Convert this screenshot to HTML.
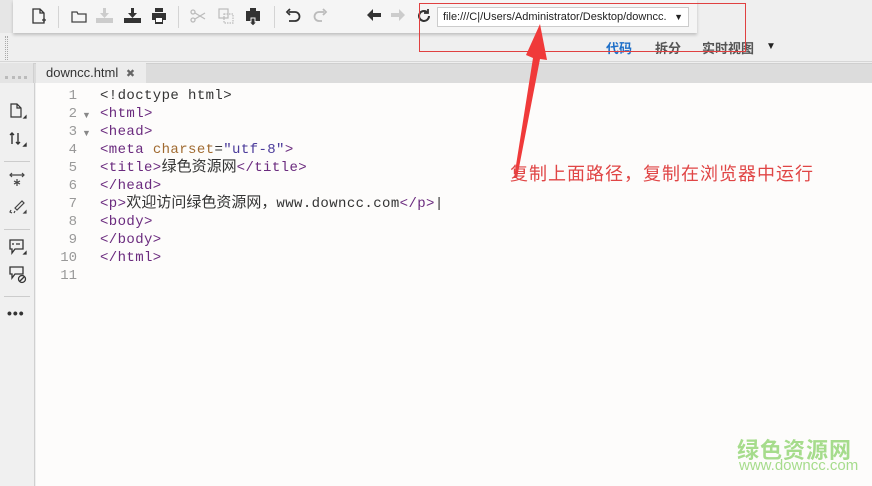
<!DOCTYPE html>
<html><head><meta charset="utf-8"><style>
*{margin:0;padding:0;box-sizing:border-box}
body{width:872px;height:486px;overflow:hidden;background:#efefef;font-family:"Liberation Sans","Noto Sans CJK SC",sans-serif;position:relative}
.abs{position:absolute}
#tb{left:13px;top:0;width:684px;height:33px;background:#f5f5f5;box-shadow:0 2px 3px rgba(0,0,0,.2)}
.sep{position:absolute;top:6px;width:1px;height:22px;background:#d4d4d4}
.ic{position:absolute;top:8px}
#url{left:437px;top:7px;width:252px;height:20px;background:#fff;border:1px solid #ccc;font-size:11px;line-height:18px;padding-left:5px;color:#222}
#tabs{left:0;top:63px;width:872px;height:20px;background:#dcdcdc;border-top:1px solid #cfcfcf}
#tab{left:36px;top:63px;width:110px;height:20px;background:#ececec;font-size:13px;line-height:20px;padding-left:10px;color:#333}
#side{left:0;top:83px;width:35px;height:403px;background:#f0f0f0;border-right:1px solid #d0d0d0}
#ed{left:36px;top:83px;width:836px;height:403px;background:#fdfcfb}
.ln{position:absolute;left:40px;width:37px;text-align:right;font:14px/18px "Liberation Mono",monospace;color:#999;height:18px}
.cd{position:absolute;left:100px;font:14px/18px "Liberation Mono","Noto Sans CJK SC",monospace;color:#333;white-space:pre;letter-spacing:0.4px;height:18px}
.cd .z{letter-spacing:0;font-size:15px}
.t{color:#6a2a7e}.a{color:#a06a30}.s{color:#4a3a9a}
.fold{position:absolute;left:82px;font-size:9px;color:#888}
</style></head><body>
<div class="abs" style="left:0;top:0;width:13px;height:33px;background:#e6e6e6"></div>
<div id="tb" class="abs">
<svg class="ic" style="left:18px" width="16" height="17" viewBox="0 0 16 17" fill="none" stroke="#333" stroke-width="1.3"><path d="M2 1h7l4 4v10H2z M9 1v4h4"/><path d="M11 12h4M13 10v4"/></svg>
<div class="sep" style="left:45px"></div>
<svg class="ic" style="left:58px" width="16" height="16" viewBox="0 0 16 16" fill="none" stroke="#444" stroke-width="1.3"><path d="M1 4h5l1 2h8v8H1z"/></svg>
<svg class="ic" style="left:83px" width="17" height="16" viewBox="0 0 17 16" fill="#ccc"><path d="M7 0h3v5h3l-4.5 5L4 5h3zM0 10h17v5H0z"/></svg>
<svg class="ic" style="left:111px" width="17" height="16" viewBox="0 0 17 16" fill="#333"><path d="M7 0h3v5h3l-4.5 5L4 5h3zM0 10h17v5H0z"/></svg>
<svg class="ic" style="left:138px" width="16" height="16" viewBox="0 0 16 16" fill="#333"><path d="M4 0h8v4H4zM1 5h14v7h-3v4H4v-4H1z"/><rect x="5" y="10" width="6" height="4" fill="#fff"/></svg>
<div class="sep" style="left:165px"></div>
<svg class="ic" style="left:177px" width="16" height="16" viewBox="0 0 16 16" fill="none" stroke="#bbb" stroke-width="1.3"><circle cx="3" cy="4" r="2"/><circle cx="3" cy="12" r="2"/><path d="M5 5l10 6M5 11l10-6"/></svg>
<svg class="ic" style="left:205px" width="16" height="17" viewBox="0 0 16 17" fill="none" stroke="#bbb" stroke-width="1.2"><rect x="1" y="1" width="9" height="9"/><rect x="6" y="6" width="9" height="9" stroke-dasharray="1.5 1"/></svg>
<svg class="ic" style="left:233px" width="14" height="18" viewBox="0 0 14 18" fill="#333"><path d="M4 0h6v3h4v10H0V3h4z"/><path d="M5 10h4v4h2l-4 4-4-4h2z" fill="#333" stroke="#f5f5f5"/></svg>
<div class="sep" style="left:261px"></div>
<svg class="ic" style="left:272px" width="16" height="16" viewBox="0 0 16 16" fill="none" stroke="#333" stroke-width="1.8"><path d="M4 4h6a4 4 0 010 9H4"/><path d="M5 1L2 4l3 3" /></svg>
<svg class="ic" style="left:299px" width="16" height="16" viewBox="0 0 16 16" fill="none" stroke="#bbb" stroke-width="1.8"><path d="M12 4H7a4 4 0 000 9h3"/><path d="M11 1l3 3-3 3"/></svg>
<svg class="ic" style="left:354px" width="14" height="14" viewBox="0 0 14 14" fill="#333"><path d="M0 7l6-6v4h8v4H6v4z"/></svg>
<svg class="ic" style="left:378px" width="14" height="14" viewBox="0 0 14 14" fill="#ccc"><path d="M14 7L8 1v4H0v4h8v4z"/></svg>
<svg class="ic" style="left:403px" width="16" height="16" viewBox="0 0 16 16" fill="none" stroke="#333" stroke-width="2"><path d="M13 8a5 5 0 11-2-4"/><path d="M12 1v4H8" stroke-width="1.8"/></svg>
</div>
<div id="url" class="abs">file:///C|/Users/Administrator/Desktop/downcc.<span style="position:absolute;right:5px;top:0;font-size:9px">▼</span></div>
<div class="abs" style="left:5px;top:36px;width:3px;height:24px;border-left:1px dotted #aaa;border-right:1px dotted #aaa"></div>
<div class="abs" style="left:0;top:61px;width:872px;height:1px;background:#d6d6d6"></div>
<div class="abs" style="left:606px;top:38px;font-size:13px;font-weight:bold;color:#1e6fc8">代码</div>
<div class="abs" style="left:655px;top:38px;font-size:13px;font-weight:bold;color:#555">拆分</div>
<div class="abs" style="left:702px;top:38px;font-size:13px;font-weight:bold;color:#555">实时视图</div>
<div class="abs" style="left:766px;top:41px;font-size:10px;color:#222">▼</div>
<div id="tabs" class="abs"></div>
<div id="tab" class="abs">downcc.html <span style="font-size:11px;color:#666;margin-left:4px">✖</span></div>
<div id="side" class="abs">
<div style="position:absolute;left:0;top:-20px;width:34px;height:20px;background:#e4e4e4;border-right:1px solid #d0d0d0"></div>
<div style="position:absolute;left:5px;top:-7px;width:22px;border-top:3px dotted #bbb"></div>
<svg style="position:absolute;left:9px;top:20px" width="18" height="18" fill="none" stroke="#333" stroke-width="1.2"><path d="M2 1h6l4 4v9H2zM8 1v4h4"/><path d="M15 15l2-2v2z" fill="#333"/></svg>
<svg style="position:absolute;left:9px;top:48px" width="18" height="18" fill="none" stroke="#333" stroke-width="1.4"><path d="M3 13V2M1 4l2-2 2 2M9 2v11M7 11l2 2 2-2"/><path d="M15 15l2-2v2z" fill="#333"/></svg>
<div style="position:absolute;left:4px;top:78px;width:26px;height:1px;background:#ccc"></div>
<svg style="position:absolute;left:9px;top:89px" width="18" height="16" fill="none" stroke="#444" stroke-width="1.2"><path d="M1 3h14M3 1L1 3l2 2M13 1l2 2-2 2M8 7v7M5 9l6 3M11 9l-6 3"/></svg>
<svg style="position:absolute;left:9px;top:115px" width="18" height="18" fill="none" stroke="#444" stroke-width="1.2"><path d="M6 10l7-7 2 2-7 7zM2 12l-1 2 2 1M5 15l1-2"/><path d="M15 15l2-2v2z" fill="#333"/></svg>
<div style="position:absolute;left:4px;top:146px;width:26px;height:1px;background:#ccc"></div>
<svg style="position:absolute;left:9px;top:156px" width="18" height="18" fill="none" stroke="#333" stroke-width="1.3"><path d="M1 1h13v9H6l-3 4v-4H1z"/><path d="M4 4v2M7 5h4"/><path d="M15 15l2-2v2z" fill="#333"/></svg>
<svg style="position:absolute;left:9px;top:183px" width="18" height="18" fill="none" stroke="#333" stroke-width="1.3"><path d="M1 1h13v7H6l-3 4V8H1z"/><circle cx="13" cy="13" r="3.5"/><path d="M11 15l4-4"/></svg>
<div style="position:absolute;left:4px;top:213px;width:26px;height:1px;background:#ccc"></div>
<div style="position:absolute;left:7px;top:222px;font-size:14px;font-weight:bold;color:#333;letter-spacing:1px">•••</div>
</div>
<div id="ed" class="abs"></div>
<div class="ln" style="top:87px">1</div><div class="ln" style="top:105px">2</div><div class="ln" style="top:123px">3</div><div class="ln" style="top:141px">4</div><div class="ln" style="top:159px">5</div><div class="ln" style="top:177px">6</div><div class="ln" style="top:195px">7</div><div class="ln" style="top:213px">8</div><div class="ln" style="top:231px">9</div><div class="ln" style="top:249px">10</div><div class="ln" style="top:267px">11</div>
<div class="fold" style="top:110px">▼</div><div class="fold" style="top:128px">▼</div>
<div class="cd" style="top:87px">&lt;!doctype html&gt;</div>
<div class="cd t" style="top:105px">&lt;html&gt;</div>
<div class="cd t" style="top:123px">&lt;head&gt;</div>
<div class="cd" style="top:141px"><span class="t">&lt;meta </span><span class="a">charset</span>=<span class="s">"utf-8"</span><span class="t">&gt;</span></div>
<div class="cd" style="top:159px"><span class="t">&lt;title&gt;</span><span class="z">绿色资源网</span><span class="t">&lt;/title&gt;</span></div>
<div class="cd t" style="top:177px">&lt;/head&gt;</div>
<div class="cd" style="top:195px"><span class="t">&lt;p&gt;</span><span class="z">欢迎访问绿色资源网，</span>www.downcc.com<span class="t">&lt;/p&gt;</span>|</div>
<div class="cd t" style="top:213px">&lt;body&gt;</div>
<div class="cd t" style="top:231px">&lt;/body&gt;</div>
<div class="cd t" style="top:249px">&lt;/html&gt;</div>
<div class="abs" style="left:419px;top:3px;width:327px;height:49px;border:1px solid #e04040"></div>
<svg class="abs" style="left:500px;top:20px" width="60" height="165"><path d="M14 158L33 38 26 35 40 4 47 40 40 39 17 158z" fill="#f03a3a"/></svg>
<div class="abs" style="left:510px;top:160px;font-size:18px;letter-spacing:1px;color:#e04545">复制上面路径，复制在浏览器中运行</div>
<div class="abs" style="left:737px;top:433px;font-size:22px;font-weight:bold;color:#a6dc8c;letter-spacing:1px">绿色资源网</div>
<div class="abs" style="left:739px;top:457px;font-size:15px;color:#a6dc8c">www.downcc.com</div>
</body></html>
